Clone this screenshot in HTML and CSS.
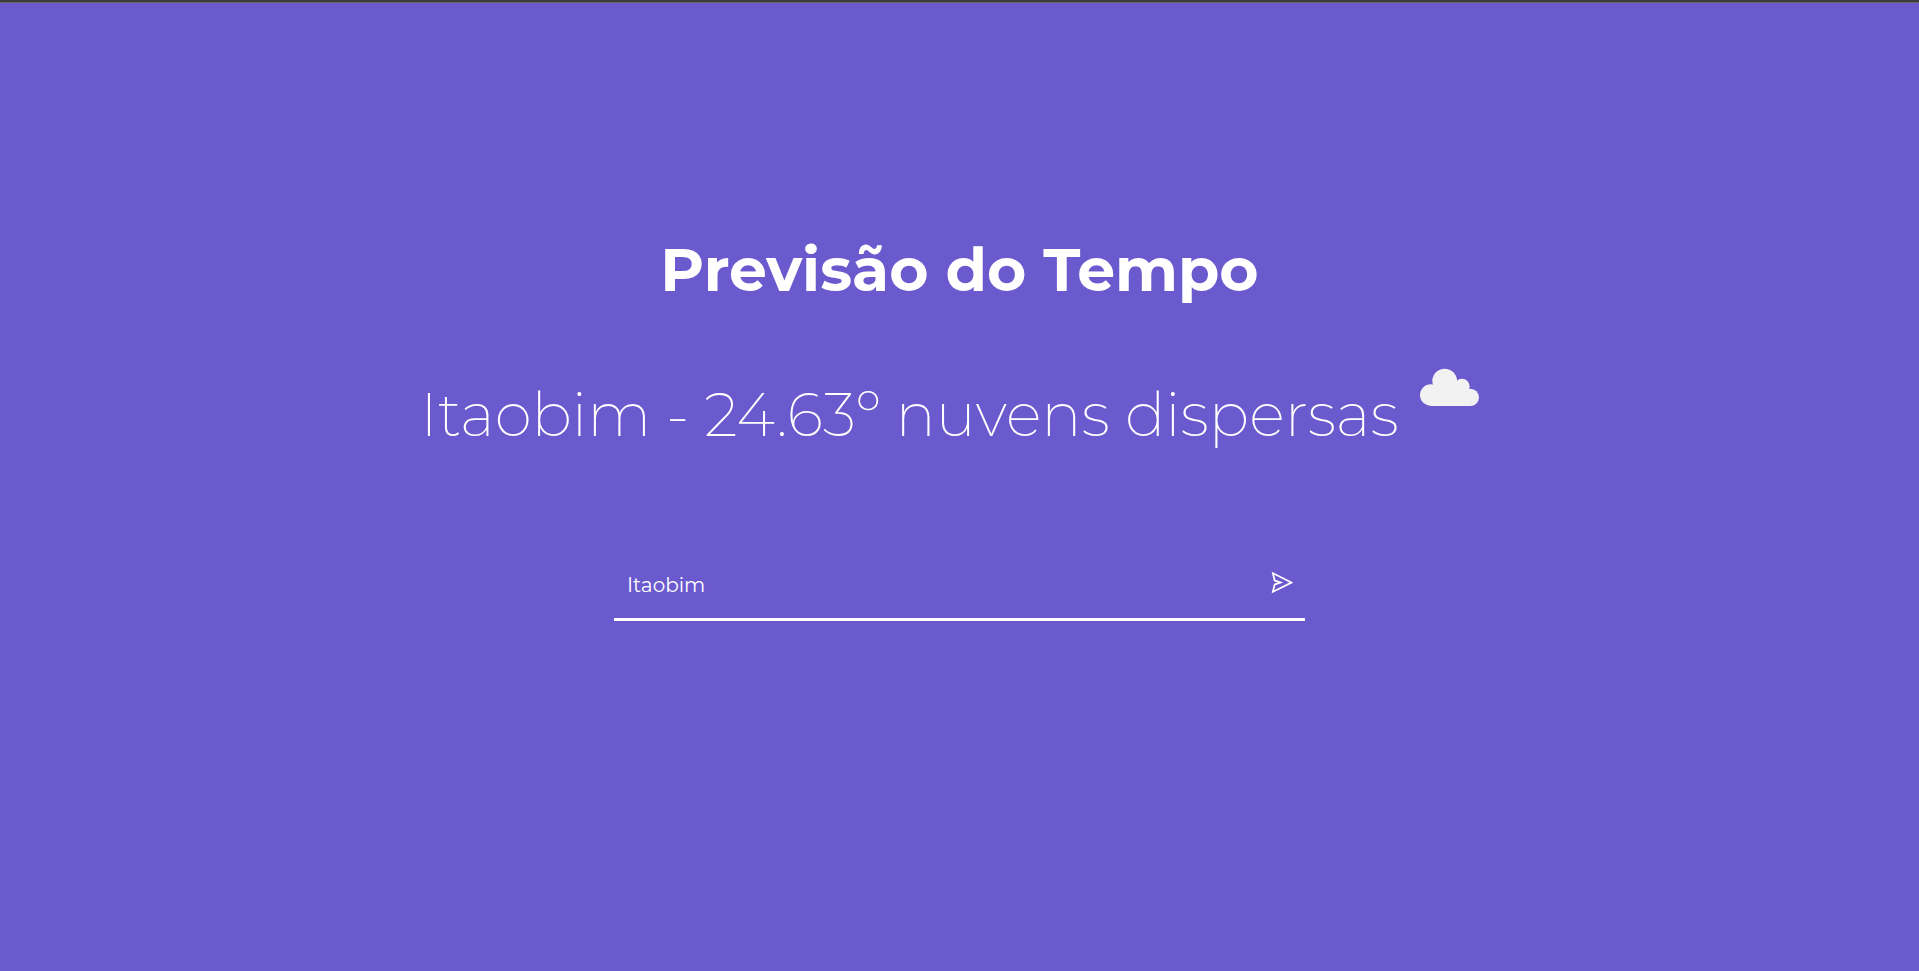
FILE: index.html
```html
<!DOCTYPE html>
<html lang="pt-BR">
<head>
<meta charset="utf-8">
<meta name="viewport" content="width=device-width, initial-scale=1">
<title>Previsão do Tempo</title>
<link rel="stylesheet" href="styles.css">
</head>
<body>
<main class="weather">
  <h1 class="title">Previsão do Tempo</h1>
  <div class="result">
    <p class="summary">Itaobim - 24.63º nuvens dispersas</p>
    <svg class="cloud" viewBox="0 0 300 300" role="img" aria-label="nuvens dispersas">
      <circle cx="137" cy="135" r="37"/>
      <circle cx="95" cy="177" r="32"/>
      <circle cx="189" cy="151" r="23"/>
      <circle cx="214" cy="184" r="26"/>
      <path d="M95 150h90l29 15v45H95z"/>
    </svg>
  </div>
  <form class="search">
    <input class="city" type="text" value="Itaobim" aria-label="Cidade">
    <button class="send" type="button" aria-label="Buscar">
      <svg class="send-icon" viewBox="0 0 1024 1024" aria-hidden="true">
        <path d="M931.4 498.9L94.9 79.5c-3.4-1.7-7.3-2.1-11-1.2a15.99 15.99 0 0 0-11.7 19.3l86.2 352.2c1.3 5.3 5.2 9.6 10.4 11.3l147.7 50.7-147.6 50.7c-5.2 1.8-9.1 6-10.3 11.3L72.2 926.5c-.9 3.7-.5 7.6 1.2 10.9 3.9 7.9 13.5 11.1 21.5 7.2l836.5-417c3.1-1.5 5.6-4.1 7.2-7.1 3.9-8 .7-17.6-7.2-21.6zM170.8 826.3l50.3-205.6 295.2-101.3c2.3-.8 4.2-2.6 5-5 1.4-4.2-.8-8.7-5-10.2L221.1 403 171 198.2l628 314.9-628.2 313.2z"/>
      </svg>
    </button>
  </form>
</main>
</body>
</html>
```
FILE: styles.css
```css
* {
  box-sizing: border-box;
  margin: 0;
  padding: 0;
}

body {
  min-height: 100vh;
  background: #6b5acd;
  border-top: 2px solid #3c3c3c;
  box-shadow: inset 0 1px #66646c;
  color: #fff;
  font-family: Montserrat, Inter, "Open Sans", sans-serif;
}

.weather {
  display: flex;
  flex-direction: column;
  align-items: center;
  padding: 232px 0 40px;
}

.title {
  font-size: 60px;
  font-weight: 700;
  line-height: 72px;
}

.result {
  display: flex;
  align-items: flex-start;
  margin-top: 30px;
}

.summary {
  padding-top: 43px;
  font-size: 60px;
  font-weight: 200;
  line-height: 72px;
}

.cloud {
  flex: none;
  width: 100px;
  height: 100px;
  fill: #f2f2f2;
}

.search {
  display: flex;
  align-items: center;
  width: 36%;
  min-width: 300px;
  margin-top: 114px;
  padding: 0 10px 19px 13px;
  border-bottom: 3px solid #fff;
}

.city {
  flex: 1;
  min-width: 0;
  padding-top: 6px;
  border: 0;
  outline: 0;
  background: transparent;
  color: inherit;
  font: 400 20px/28px Montserrat, Inter, "Open Sans", sans-serif;
}

.send {
  display: flex;
  border: 0;
  background: transparent;
  color: inherit;
  cursor: pointer;
}

.send-icon {
  width: 25px;
  height: 25px;
  fill: currentColor;
}
```
